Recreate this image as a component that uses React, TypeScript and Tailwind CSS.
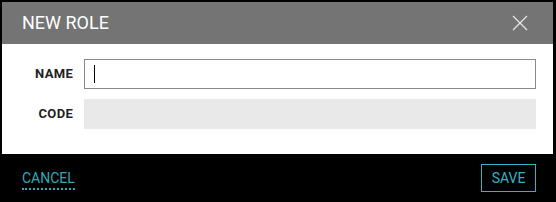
import React from "react";

export default function App() {
  return (
    <div
      className="w-[556px] h-[202px] bg-black pt-[2px] pl-[2px] pr-[3px] flex flex-col"
      style={{ fontFamily: "Roboto, 'Liberation Sans', sans-serif" }}
    >
      <div className="h-[42px] bg-[#747474] flex items-center justify-between pl-[20px] pr-[25px]">
        <span className="text-white text-[18px] leading-none">NEW ROLE</span>
        <svg width="16" height="16" viewBox="0 0 16 16" className="text-[#e6e6e6]">
          <path d="M1 1 L15 15 M15 1 L1 15" stroke="currentColor" strokeWidth="1.3" fill="none" />
        </svg>
      </div>
      <div className="h-[110px] bg-white pt-[15px] pr-[17px] flex flex-col gap-[10px]">
        <div className="flex items-center gap-[11px]">
          <label className="w-[71px] text-right text-[13px] font-bold text-[#222] tracking-[0.3px]">NAME</label>
          <div className="flex-1 h-[30px] border border-[#8a8a8a] flex items-center pl-[9px]">
            <div className="w-[1px] h-[18px] bg-black" />
          </div>
        </div>
        <div className="flex items-center gap-[11px]">
          <label className="w-[71px] text-right text-[13px] font-bold text-[#222] tracking-[0.3px]">CODE</label>
          <div className="flex-1 h-[30px] bg-[#e9e9e9]" />
        </div>
      </div>
      <div className="flex-1 flex items-center justify-between pl-[20px] pr-[17px]">
        <span className="text-[#2fa9ba] text-[14px] leading-none border-b-2 border-dotted border-[#2fa9ba] pb-[3px] mt-[4px]">
          CANCEL
        </span>
        <button className="w-[55px] h-[28px] border border-[#35b3c6] text-[#35b3c6] text-[14px] flex items-center justify-center">
          SAVE
        </button>
      </div>
    </div>
  );
}
